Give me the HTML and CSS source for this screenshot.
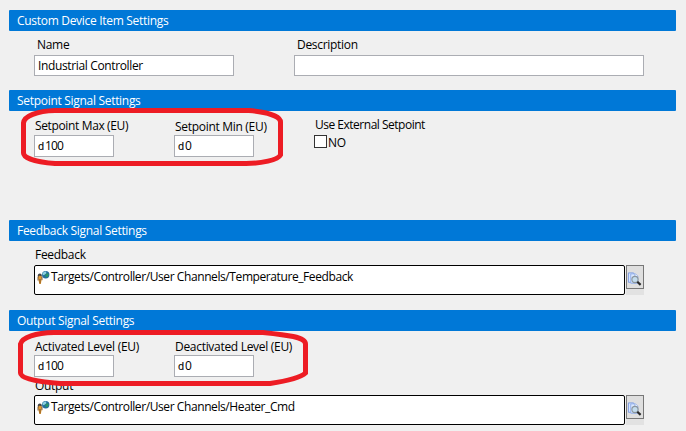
FILE: index.html
```
<!DOCTYPE html>
<html lang="en">
<head>
<meta charset="utf-8">
<title>Custom Device Item Settings</title>
<link rel="stylesheet" href="styles.css">
</head>
<body>
<svg class="defs" width="0" height="0" aria-hidden="true">
  <symbol id="channel" viewBox="0 0 13 13">
    <circle cx="8.7" cy="3.7" r="3.7" fill="#246d9e"/>
    <path d="M5.4 2.5Q7 .2 9 .6L9.4 2.2 7.5 3.8 6 4.3z" fill="#8fd3df"/>
    <path d="M8.4 3.6l2.5-1.5 1 1.8-1.5 2.3-2.1-.6z" fill="#2b9366"/>
    <circle cx="2.8" cy="4.4" r="2" fill="#444"/>
    <path d="M1 6l1.8-1.5L5 6l-.4 3L3.8 13H2.3L1.4 9z" fill="#e49b32"/>
    <path d="M1 5.500v4M5 5.500v3.700M3 8v4.500" stroke="#5b3a1c" stroke-width=".8" fill="none"/>
  </symbol>
  <symbol id="browse" viewBox="0 0 16 16">
    <path d="M1.500 1.500H7v10H1.500z" fill="#d5e5ff" stroke="#7c9be0"/>
    <path d="M4 2.500h5l2.500 2.500v7.500H4z" fill="#dceaff" stroke="#8fabea"/>
    <path d="M8.500 2.500V5.500H11.500" fill="#fff" stroke="#8ca7df"/>
    <circle cx="8.500" cy="8.500" r="3.300" fill="#c3dced" stroke="#8b969e" stroke-width="1.200"/>
    <path d="M11 11l3.500 3.300" stroke="#292929" stroke-width="2.300"/>
  </symbol>
</svg>
<main class="panel">
  <section class="section general">
    <h2><span>Custom Device Item Settings</span></h2>
    <div class="row">
      <div class="field name"><label><span>Name</span></label><div class="input"><span class="snug">Industrial Controller</span></div></div>
      <div class="field description"><label><span>Description</span></label><div class="input"></div></div>
    </div>
  </section>
  <section class="section setpoint">
    <h2><span>Setpoint Signal Settings</span></h2>
    <div class="row">
      <div class="field number"><label><span class="snug">Setpoint Max (EU)</span></label><div class="input"><i>d</i><span class="value">100</span></div></div>
      <div class="field number lower"><label><span>Setpoint Min (EU)</span></label><div class="input"><i>d</i><span>0</span></div></div>
      <div class="field external"><label><span class="tight">Use External Setpoint</span></label><div class="check"><b></b><span>NO</span></div></div>
    </div>
    <svg class="mark" width="262" height="58" viewBox="0 0 262 58"><path d="M34 2.500H228C245 4 259.500 8 259.500 14V47C257 52 240 55.500 225 55.500H34C15 54 2.500 50 2.500 45V15C3 8 16 3 34 2.500z"/></svg>
  </section>
  <section class="section feedback">
    <h2><span>Feedback Signal Settings</span></h2>
    <div class="field channel"><label><span>Feedback</span></label>
      <div class="picker"><div class="path"><svg width="13" height="13"><use href="#channel"/></svg><span class="target">Targets/Controller/User Channels/Temperature_Feedback</span></div><div class="side"><button aria-label="Browse"><svg width="15" height="16"><use href="#browse"/></svg></button></div></div>
    </div>
  </section>
  <section class="section output">
    <h2><span>Output Signal Settings</span></h2>
    <div class="row">
      <div class="field number"><label><span class="loose">Activated Level (EU)</span></label><div class="input"><i>d</i><span class="value">100</span></div></div>
      <div class="field number"><label><span>Deactivated Level (EU)</span></label><div class="input"><i>d</i><span>0</span></div></div>
    </div>
    <div class="field channel"><label><span>Output</span></label>
      <div class="picker"><div class="path"><svg width="13" height="13"><use href="#channel"/></svg><span class="target">Targets/Controller/User Channels/Heater_Cmd</span></div><div class="side"><button aria-label="Browse"><svg width="15" height="16"><use href="#browse"/></svg></button></div></div>
    </div>
    <svg class="mark" width="290" height="56" viewBox="0 0 290 56"><path d="M36 2.500H245C269 5 287.500 7 287.500 14V43C282 48 269 51 252 53.500H42C22 52 2.500 49 2.500 43V14C4 7 18 3 36 2.500z"/></svg>
  </section>
</main>
</body>
</html>
```
FILE: styles.css
```
* { box-sizing: border-box; }
body { margin: 0; height: 431px; overflow: hidden; background: #f0f0f0; color: #000; font: 12px/16px "Open Sans", "Noto Sans", sans-serif; letter-spacing: -0.3px; }
.defs { display: none; }
.panel { padding: 10px 10px 0 9px; }
.section { position: relative; width: 667px; }
.general { height: 80px; }
.setpoint { height: 130px; }
.feedback { height: 90px; }
.output { height: 121px; }
h2 { margin: 0; height: 21px; padding: 3px 0 0 8px; background: #0078d7; color: #fff; font: inherit; border-radius: 1px; }
span { display: inline-block; white-space: nowrap; }
.snug { letter-spacing: -0.36px; }
.tight { letter-spacing: -0.49px; }
.loose { letter-spacing: -0.25px; }
.target { letter-spacing: -0.41px; }
.value { letter-spacing: -0.8px; }
.row { display: flex; padding-left: 25px; }
.field { display: flex; flex-direction: column; }
label { display: block; height: 24px; padding: 6px 0 0 1px; }
.input { height: 21px; border: 1px solid #abadb3; background: #fff; padding: 2px 0 0 3px; display: flex; }
.name { width: 200px; margin-right: 60px; }
.name label, .description label { padding-left: 3px; }
.description { width: 350px; }
.number { width: 80px; margin-right: 60px; }
.number .input { height: 22px; }
.number i { font: 10px/16px "Open Sans", sans-serif; width: 7px; -webkit-text-stroke: 0.2px #000; }
.setpoint .number label { padding-top: 7px; }
.setpoint .lower label { padding-top: 8px; }
.check { display: flex; height: 16px; }
.check b { width: 13px; height: 13px; border: 1px solid #333; background: #fff; margin-right: 1px; }
.channel { padding-left: 25px; }
.picker { display: flex; height: 30px; }
.path { width: 591px; height: 30px; border: 1px solid #000; border-radius: 2px; background: #fff; display: flex; padding: 3px 0 0 2px; }
.path svg { margin: 2px 1px 0 0; }
.side { width: 18px; margin-left: 1px; background: #e2e2e2; }
button { display: block; width: 18px; height: 24px; padding: 3px 0 0 0; border: 1px solid #777; background: #dfdfdf; }
button svg { display: block; }
.output .number label { padding-top: 8px; }
.output .channel label { height: 18px; padding-top: 1px; }
.mark { position: absolute; left: 12px; top: 18px; overflow: visible; }
.output .mark { left: 9px; top: 20px; }
.mark path { fill: none; stroke: #ed1c24; stroke-width: 5; }
```
